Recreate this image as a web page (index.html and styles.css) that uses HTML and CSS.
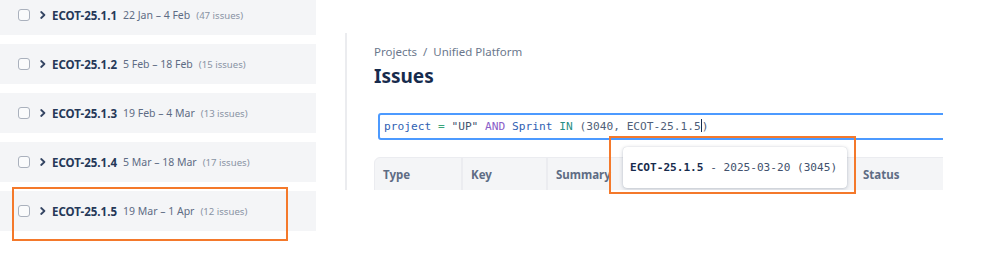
FILE: index.html
```html
<!DOCTYPE html>
<html>
<head>
<meta charset="utf-8">
<link rel="stylesheet" href="styles.css">
</head>
<body>
<div class="page">
  <div class="sprints">
    <div class="row"><span class="cb"></span><svg class="chev" width="6" height="8" viewBox="0 0 6 8"><path d="M1.2 1 L4.4 4 L1.2 7" fill="none" stroke="#344563" stroke-width="1.8" stroke-linecap="round" stroke-linejoin="round"/></svg><span class="name">ECOT-25.1.1</span><span class="dates">22 Jan – 4 Feb</span><span class="count">(47 issues)</span></div>
    <div class="row"><span class="cb"></span><svg class="chev" width="6" height="8" viewBox="0 0 6 8"><path d="M1.2 1 L4.4 4 L1.2 7" fill="none" stroke="#344563" stroke-width="1.8" stroke-linecap="round" stroke-linejoin="round"/></svg><span class="name">ECOT-25.1.2</span><span class="dates">5 Feb – 18 Feb</span><span class="count">(15 issues)</span></div>
    <div class="row"><span class="cb"></span><svg class="chev" width="6" height="8" viewBox="0 0 6 8"><path d="M1.2 1 L4.4 4 L1.2 7" fill="none" stroke="#344563" stroke-width="1.8" stroke-linecap="round" stroke-linejoin="round"/></svg><span class="name">ECOT-25.1.3</span><span class="dates">19 Feb – 4 Mar</span><span class="count">(13 issues)</span></div>
    <div class="row"><span class="cb"></span><svg class="chev" width="6" height="8" viewBox="0 0 6 8"><path d="M1.2 1 L4.4 4 L1.2 7" fill="none" stroke="#344563" stroke-width="1.8" stroke-linecap="round" stroke-linejoin="round"/></svg><span class="name">ECOT-25.1.4</span><span class="dates">5 Mar – 18 Mar</span><span class="count">(17 issues)</span></div>
    <div class="row"><span class="cb"></span><svg class="chev" width="6" height="8" viewBox="0 0 6 8"><path d="M1.2 1 L4.4 4 L1.2 7" fill="none" stroke="#344563" stroke-width="1.8" stroke-linecap="round" stroke-linejoin="round"/></svg><span class="name">ECOT-25.1.5</span><span class="dates">19 Mar – 1 Apr</span><span class="count">(12 issues)</span></div>
  </div>
  <div class="panel">
    <div class="crumbs">Projects&nbsp; / &nbsp;Unified Platform</div>
    <h1 class="title">Issues</h1>
    <div class="jql"><span class="k">project</span> <span class="op">=</span> <span class="s">"UP"</span> <span class="kw">AND</span> <span class="k">Sprint</span> <span class="in">IN</span> <span class="v">(3040, ECOT-25.1.5<span class="caret"></span>)</span></div>
    <div class="thead">
      <div class="th col-type">Type</div>
      <div class="th col-key">Key</div>
      <div class="th col-sum">Summary</div>
      <div class="th col-status">Status</div>
    </div>
    <div class="suggest"><b>ECOT-25.1.5</b> - 2025-03-20 (3045)</div>
  </div>
  <div class="mark mark-row"></div>
  <div class="mark mark-suggest"></div>
</div>
</body>
</html>
```
FILE: styles.css
```css
html, body {
  margin: 0;
  padding: 0;
  background: #ffffff;
}
.page {
  position: relative;
  width: 999px;
  height: 273px;
  overflow: hidden;
  display: flex;
  align-items: flex-start;
  font-family: "Noto Sans", "Open Sans", sans-serif;
}
.sprints {
  width: 316px;
  flex: none;
  display: flex;
  flex-direction: column;
  gap: 9px;
  margin-top: -5px;
}
.row {
  height: 40px;
  background: #f4f5f7;
  display: flex;
  align-items: center;
  padding-left: 18px;
  white-space: nowrap;
}
.cb {
  width: 10px;
  height: 10px;
  border: 1.5px solid #aab1bd;
  border-radius: 3px;
  background: #fafbfc;
  flex: none;
}
.chev {
  margin-left: 10px;
  margin-right: 6px;
  flex: none;
}
.name {
  font-size: 11.5px;
  font-weight: 700;
  color: #253858;
  margin-right: 6px;
}
.dates {
  font-size: 10.5px;
  color: #5e6c84;
  margin-right: 6px;
}
.count {
  font-size: 9.6px;
  color: #8993a4;
}
.panel {
  position: relative;
  margin-left: 29px;
  margin-top: 33px;
  width: 598px;
  height: 157px;
  border-left: 2px solid #ebecef;
  overflow: hidden;
  padding-left: 27px;
  box-sizing: border-box;
}
.crumbs {
  margin-top: 11px;
  font-size: 11.5px;
  line-height: 16px;
  color: #6b778c;
}
.title {
  margin: 4px 0 0 0;
  font-size: 19px;
  line-height: 24px;
  font-weight: 700;
  color: #172b4d;
}
.jql {
  margin-top: 25px;
  margin-left: 4px;
  width: 600px;
  height: 23px;
  border: 2px solid #4c9aff;
  border-radius: 3px;
  padding-left: 4px;
  box-sizing: content-box;
  font-family: "DejaVu Sans Mono", "Liberation Mono", monospace;
  font-size: 11.2px;
  line-height: 23px;
  color: #42526e;
  white-space: nowrap;
}
.jql .k { color: #2f5fb3; }
.jql .op { color: #3aa57a; }
.jql .s { color: #42526e; }
.jql .kw { color: #8a5ec8; }
.jql .in { color: #2a8f86; }
.jql .v { color: #505f79; }
.caret {
  display: inline-block;
  width: 1px;
  height: 13px;
  background: #172b4d;
  vertical-align: -2px;
}
.thead {
  margin-top: 17px;
  width: 640px;
  height: 40px;
  background: #f4f5f7;
  border: 1px solid #ebecf0;
  border-radius: 6px 6px 0 0;
  display: grid;
  grid-template-columns: 88px 85px 307px 1fr;
}
.th {
  font-size: 11.5px;
  font-weight: 700;
  color: #5e6c84;
  padding: 9px 0 0 8px;
  line-height: 16px;
}
.col-type, .col-key {
  border-right: 2px solid #ebecf0;
}
.suggest {
  position: absolute;
  left: 276px;
  top: 114px;
  width: 224px;
  height: 41px;
  box-sizing: border-box;
  background: #ffffff;
  border-radius: 4px;
  box-shadow: 0 1px 4px rgba(9, 30, 66, 0.22), 0 0 1px rgba(9, 30, 66, 0.2);
  padding-left: 7px;
  font-family: "DejaVu Sans Mono", "Liberation Mono", monospace;
  font-size: 11.1px;
  line-height: 41px;
  color: #42526e;
  white-space: nowrap;
}
.suggest b {
  color: #172b4d;
}
.mark {
  position: absolute;
  border: 2px solid #f4792b;
  box-sizing: border-box;
}
.mark-row {
  left: 12px;
  top: 187px;
  width: 276px;
  height: 54px;
}
.mark-suggest {
  left: 609px;
  top: 136px;
  width: 247px;
  height: 58px;
}
```
